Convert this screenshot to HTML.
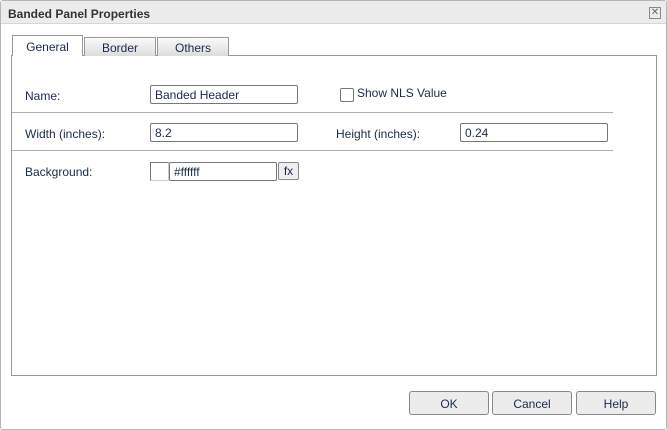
<!DOCTYPE html>
<html><head><style>
*{box-sizing:border-box;margin:0;padding:0}
body{width:667px;height:430px;background:#fff;font-family:"Liberation Sans",Tahoma,sans-serif;font-size:12px;color:#1a2a4a;position:relative;overflow:hidden}
.a{position:absolute}
.dlg{left:0;top:0;width:667px;height:430px;border:1px solid #b5b5b5;border-radius:3px}
.title{left:1px;top:1px;width:665px;height:23px;background:#ececec;border-bottom:1px solid #d6d6d6;font-weight:bold;font-size:12px;color:#333;padding:6px 0 0 7px}
.x{left:649px;top:7px;width:12px;height:12px;border:1px solid #888;font-size:10px;line-height:9px;text-align:center;color:#666}
.tab{top:37px;height:19px;border:1px solid #999;border-bottom:none;background:linear-gradient(#fafafa,#dcdcdc);text-align:center;padding-top:3px;color:#1a2a4a}
.tab.on{background:#fff;top:35px;height:21px;padding-top:4px;z-index:2}
.panel{left:11px;top:55px;width:646px;height:321px;border:1px solid #999}
.inp{height:19px;border:1px solid #777;border-radius:2px;padding:2px 4px;color:#1a2a4a}
.hr{left:12px;width:601px;height:1px;background:#b0b0b0}
.btn{top:391px;height:24px;border:1px solid #888;border-radius:3px;background:#ececec;text-align:center;padding-top:5px;color:#1a2a4a}
</style></head><body>
<div class="a dlg"></div>
<div class="a title">Banded Panel Properties</div>
<div class="a x">✕</div>
<div class="a panel"></div>
<div class="a tab on" style="left:12px;width:71px">General</div>
<div class="a tab" style="left:84px;width:72px">Border</div>
<div class="a tab" style="left:157px;width:72px">Others</div>
<div class="a" style="left:25px;top:89px">Name:</div>
<div class="a inp" style="left:150px;top:85px;width:148px">Banded Header</div>
<div class="a" style="left:340px;top:88px;width:14px;height:14px;border:1px solid #777;border-radius:2px"></div>
<div class="a" style="left:357px;top:86px">Show NLS Value</div>
<div class="a hr" style="top:112px"></div>
<div class="a" style="left:25px;top:127px">Width (inches):</div>
<div class="a inp" style="left:150px;top:123px;width:148px">8.2</div>
<div class="a" style="left:336px;top:127px">Height (inches):</div>
<div class="a inp" style="left:460px;top:123px;width:148px">0.24</div>
<div class="a hr" style="top:150px"></div>
<div class="a" style="left:25px;top:165px">Background:</div>
<div class="a" style="left:150px;top:162px;width:19px;height:19px;border:1px solid #777;border-right-color:#ccc;border-bottom-color:#ccc"></div>
<div class="a inp" style="left:169px;top:162px;width:108px">#ffffff</div>
<div class="a" style="left:278px;top:162px;width:21px;height:18px;border:1px solid #888;border-radius:2px;background:#eee;text-align:center;padding-top:1px">fx</div>
<div class="a btn" style="left:409px;width:80px">OK</div>
<div class="a btn" style="left:492px;width:80px">Cancel</div>
<div class="a btn" style="left:576px;width:80px">Help</div>
</body></html>
